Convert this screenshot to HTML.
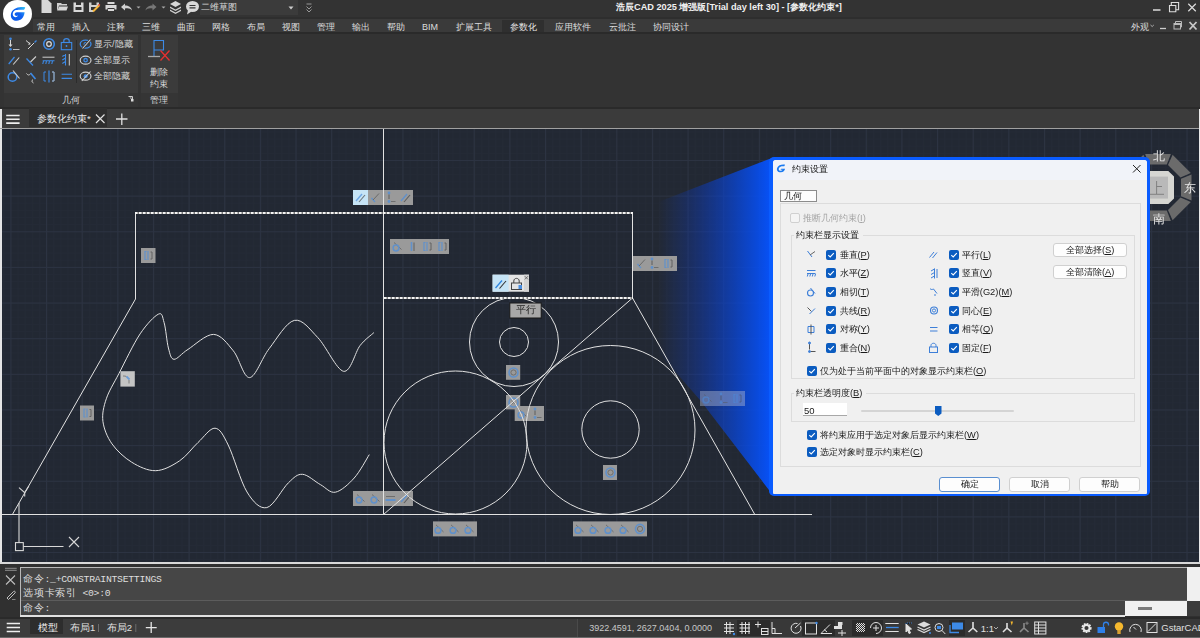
<!DOCTYPE html>
<html><head><meta charset="utf-8">
<style>
*{margin:0;padding:0;box-sizing:border-box}
html,body{width:1200px;height:638px;overflow:hidden;background:#333;font-family:"Liberation Sans",sans-serif;color:#ddd;position:relative}
.a{position:absolute}
.t{position:absolute;white-space:nowrap;line-height:1}
svg{overflow:visible}
</style></head><body>
<!-- TITLE BAR -->
<div class="a" style="left:0;top:0;width:1200px;height:17px;background:#333"></div>
<!-- logo -->
<div class="a" style="left:3.4px;top:-0.5px;width:28.7px;height:28.7px;border-radius:50%;background:#fff"></div>
<svg class="a" style="left:0;top:0" width="34" height="30" viewBox="0 0 34 30">
 <defs><linearGradient id="lg" x1="25" y1="7" x2="11" y2="20" gradientUnits="userSpaceOnUse"><stop offset="0" stop-color="#35c8f5"/><stop offset="0.45" stop-color="#1060f0"/><stop offset="1" stop-color="#0a58e8"/></linearGradient>
 <linearGradient id="lg2" x1="12" y1="20" x2="22" y2="12" gradientUnits="userSpaceOnUse"><stop offset="0" stop-color="#30b8f5"/><stop offset="1" stop-color="#0a50e8"/></linearGradient></defs>
 <path d="M25.2 7.2 C20.5 6.8 13.5 7.2 11.2 13 C9.8 17.5 12.5 21 16.8 20.8 C21 20.5 24 17.5 24.6 12.2 L17 12.2 C15.3 12.2 14.3 13.6 14.7 14.8 C15.1 16 16.8 16.3 18 15.6 C17 17.5 14.2 17.8 13.1 15.8 C12.2 14 13 11.3 15 10.3 C17 9.4 21 9.6 24 9.8 C24.8 9 25.2 8 25.2 7.2 Z" fill="url(#lg)"/>
</svg>
<!-- quick access icons -->
<svg class="a" style="left:40px;top:0" width="160" height="16" viewBox="40 0 160 16">
 <!-- new -->
 <path d="M41.5 0 H48 L51.5 3.5 V13 H41.5 Z" fill="#d8d8d8"/>
 <!-- open -->
 <path d="M57 3 H61 L62 4 H67 V5.5 H59 L57.5 10.5 H57 Z" fill="#d0d0d0"/>
 <path d="M59 6.5 H68 L66.5 10.5 H57.5 Z" fill="#d8d8d8"/>
 <!-- save -->
 <path d="M73.5 2.5 H76 V5 H81 V2.5 H83.5 V12 H73.5 Z M75.5 7 V10 H81.5 V7 Z" fill="#d8d8d8" fill-rule="evenodd"/>
 <!-- save as -->
 <path d="M89 2.5 H91.5 V5 H96.5 V2.5 H99 V5.5 L96.5 8 V7 H91 V10 H94 L93 12 H89 Z" fill="#d0d0d0"/>
 <path d="M93 11.5 L99.5 5" stroke="#f6b73c" stroke-width="2"/>
 <path d="M98.5 5.5 L99.8 4.2" stroke="#e04040" stroke-width="1.5"/>
 <!-- print -->
 <path d="M107.5 2 H114.5 V4 H107.5 Z M105.5 5 H116.5 V9.5 H114.5 V8 H107.5 V9.5 H105.5 Z M108 9 H114 V11 H108 Z" fill="#d8d8d8"/>
 <!-- undo -->
 <path d="M121 7 L125 3.5 V5.5 C128.5 5.5 131.5 7 132 10.5 C130.5 8.5 128.5 8 125 8.5 V10.5 Z" fill="#d0d0d0"/>
 <path d="M136.5 6.5 L140.5 6.5 L138.5 8.5 Z" fill="#aaa"/>
 <!-- redo -->
 <path d="M156.5 7 L152.5 3.5 V5.5 C149 5.5 146 7 145.5 10.5 C147 8.5 149 8 152.5 8.5 V10.5 Z" fill="#777"/>
 <path d="M161.5 6.5 L165.5 6.5 L163.5 8.5 Z" fill="#aaa"/>
 <!-- layers -->
 <path d="M175.5 1 L181 4 L175.5 7 L170 4 Z" fill="#d8d8d8"/>
 <path d="M170 6.5 L175.5 9.5 L181 6.5 V8 L175.5 11 L170 8 Z M170 9.5 L175.5 12.5 L181 9.5 V11 L175.5 14 L170 11 Z" fill="#cfcfcf"/>
 <!-- chat -->
 <ellipse cx="192.5" cy="6.5" rx="6.5" ry="5.5" fill="#d8d8d8"/>
 <path d="M188 10 L187 14.5 L191.5 11.5 Z" fill="#d8d8d8"/>
 <path d="M189.5 5.5 H195.5 M189.5 7.8 H195.5" stroke="#333" stroke-width="1.2"/>
</svg>
<div class="a" style="left:200px;top:0;width:98px;height:15px;background:#3b3b3b"></div>
<div class="t" style="left:201px;top:2.5px;font-size:9px;color:#d6d6d6">二维草图</div>
<svg class="a" style="left:287px;top:5px" width="8" height="6"><path d="M1.5 1.5 H6.5 L4 4.5 Z" fill="#ccc"/></svg>
<svg class="a" style="left:305px;top:3px" width="8" height="10"><path d="M1.5 1 H6.5 M1.5 3.5 L4 6 L6.5 3.5 M1.5 6.5 L4 9 L6.5 6.5" stroke="#999" stroke-width="1" fill="none"/></svg>
<div class="t" style="left:616px;top:3px;font-size:9.2px;font-weight:bold;color:#f0f0f0">浩辰CAD 2025 增强版[Trial day left 30] - [参数化约束*]</div>
<!-- window controls -->
<svg class="a" style="left:1150px;top:0" width="50" height="16">
 <path d="M3 10 H10.5" stroke="#ddd" stroke-width="1.5"/>
 <path d="M19.5 5.5 H25.8 V11.8 H19.5 Z M21.3 5.5 V2.5 H28.6 V9.7 H25.8" stroke="#ddd" stroke-width="1.1" fill="none"/>
 <path d="M38.3 3.8 L45.8 11.2 M45.8 3.8 L38.3 11.2" stroke="#ddd" stroke-width="1.2"/>
</svg>

<!-- MENU ROW -->
<div class="a" style="left:33px;top:17px;width:1167px;height:1.5px;background:#2e2e2e"></div>
<div class="a" style="left:33px;top:18.5px;width:1167px;height:13.5px;background:#3a3a3a"></div>
<div class="a" style="left:502px;top:20px;width:42px;height:13px;background:#2f2f2f"></div>
<div class="t" style="left:37px;top:23px;font-size:9px;color:#dcdcdc;word-spacing:0">常用</div>
<div class="t" style="left:72px;top:23px;font-size:9px;color:#dcdcdc">插入</div>
<div class="t" style="left:107px;top:23px;font-size:9px;color:#dcdcdc">注释</div>
<div class="t" style="left:142px;top:23px;font-size:9px;color:#dcdcdc">三维</div>
<div class="t" style="left:177px;top:23px;font-size:9px;color:#dcdcdc">曲面</div>
<div class="t" style="left:212px;top:23px;font-size:9px;color:#dcdcdc">网格</div>
<div class="t" style="left:247px;top:23px;font-size:9px;color:#dcdcdc">布局</div>
<div class="t" style="left:282px;top:23px;font-size:9px;color:#dcdcdc">视图</div>
<div class="t" style="left:317px;top:23px;font-size:9px;color:#dcdcdc">管理</div>
<div class="t" style="left:352px;top:23px;font-size:9px;color:#dcdcdc">输出</div>
<div class="t" style="left:387px;top:23px;font-size:9px;color:#dcdcdc">帮助</div>
<div class="t" style="left:422px;top:23px;font-size:9px;color:#dcdcdc">BIM</div>
<div class="t" style="left:456px;top:23px;font-size:9px;color:#dcdcdc">扩展工具</div>
<div class="t" style="left:510px;top:23px;font-size:9px;color:#e8e8e8">参数化</div>
<div class="t" style="left:555px;top:23px;font-size:9px;color:#dcdcdc">应用软件</div>
<div class="t" style="left:609px;top:23px;font-size:9px;color:#dcdcdc">云批注</div>
<div class="t" style="left:653px;top:23px;font-size:9px;color:#dcdcdc">协同设计</div>
<div class="t" style="left:1131px;top:23px;font-size:9px;color:#dcdcdc">外观</div>
<svg class="a" style="left:1150px;top:17px" width="50" height="16">
 <path d="M0.5 8 L2.2 9.5 L3.8 8" stroke="#bbb" stroke-width="0.9" fill="none"/>
 <path d="M10 11.5 H16" stroke="#ccc" stroke-width="1.3"/>
 <rect x="24" y="6.5" width="6.5" height="5.5" fill="none" stroke="#bbb" stroke-width="1"/>
 <path d="M25.5 6.5 V4.5 H31.5 V10 H30.5" stroke="#bbb" stroke-width="1" fill="none"/>
 <path d="M24 7.2 H30.5" stroke="#bbb" stroke-width="1.6"/>
 <path d="M39.5 5 L46.5 12.5 M46.5 5 L39.5 12.5" stroke="#c8c8c8" stroke-width="1.8"/>
</svg>
<!-- RIBBON -->
<div class="a" style="left:0;top:32px;width:1200px;height:2px;background:#2a2a2a"></div>
<div class="a" style="left:0;top:34px;width:1200px;height:74px;background:#333"></div>
<div class="a" style="left:4px;top:35px;width:134px;height:72px;background:#3b3b3b"></div>
<div class="a" style="left:4px;top:92.5px;width:134px;height:14.5px;background:#353535"></div>
<div class="a" style="left:141px;top:35px;width:37px;height:72px;background:#3b3b3b"></div>
<div class="a" style="left:141px;top:92.5px;width:37px;height:14.5px;background:#353535"></div>
<div class="a" style="left:0;top:107px;width:1200px;height:1.5px;background:#2a2a2a"></div>
<div class="a" style="left:76px;top:40px;width:1px;height:43px;background:#2c2c2c"></div>
<svg class="a" style="left:0;top:0" width="180" height="110">
 <!-- coincident -->
 <circle cx="10.5" cy="38.8" r="1.3" fill="#3d8ae6"/>
 <path d="M10.5 40 V45.5" stroke="#d8d8d8" stroke-width="1"/>
 <path d="M8.5 44.5 L10.5 47 L12.5 44.5 Z" fill="#d8d8d8"/>
 <circle cx="10.5" cy="49.3" r="1.3" fill="#3d8ae6"/>
 <path d="M13 49.5 H19.5" stroke="#bbb" stroke-width="1"/>
 <!-- collinear -->
 <path d="M26 40.5 L29.5 43.5" stroke="#d8d8d8" stroke-width="1"/>
 <path d="M28 44.8 L30.5 44.5 L30 42 Z" fill="#d8d8d8"/>
 <path d="M28 49 L34 43" stroke="#d8d8d8" stroke-width="1"/>
 <path d="M34.5 42.5 L36.5 40.5" stroke="#3d8ae6" stroke-width="1.2"/>
 <!-- concentric -->
 <circle cx="49" cy="44" r="5.3" fill="none" stroke="#3d8ae6" stroke-width="1.6"/>
 <circle cx="49" cy="44" r="2.3" fill="none" stroke="#ddd" stroke-width="1.2"/>
 <!-- lock -->
 <path d="M63.8 42.5 V40.8 C63.8 37.8 69.2 37.8 69.2 40.8 V42.5" stroke="#3d8ae6" stroke-width="1.2" fill="none"/>
 <rect x="61.3" y="42.5" width="10.4" height="7.2" fill="none" stroke="#3d8ae6" stroke-width="1.1"/>
 <circle cx="66.5" cy="46" r="0.9" fill="#3d8ae6"/>
 <!-- parallel -->
 <path d="M8.7 64 L14.5 57" stroke="#3d8ae6" stroke-width="1.2"/>
 <path d="M13.2 64.5 L19.2 57.5" stroke="#cfcfcf" stroke-width="1.1"/>
 <!-- perpendicular -->
 <path d="M26.5 58.5 L33 65.5" stroke="#3d8ae6" stroke-width="1.2"/>
 <path d="M30.5 62 L36 56.5" stroke="#cfcfcf" stroke-width="1.1"/>
 <!-- horizontal -->
 <path d="M42.5 57.2 H54.5" stroke="#cfcfcf" stroke-width="1"/>
 <path d="M42.7 60.8 H54.5 M43.5 61 L42.8 64 M46.5 61 L45.8 64 M49.5 61 L48.8 64 M52.5 61 L51.8 64" stroke="#3d8ae6" stroke-width="1.1"/>
 <!-- vertical -->
 <path d="M65.5 54 V65.5 M65.5 54.5 L62.3 56.5 M65.5 58 L62.3 60 M65.5 61.5 L62.3 63.5" stroke="#3d8ae6" stroke-width="1.1"/>
 <path d="M69.3 54 V65.5" stroke="#cfcfcf" stroke-width="1"/>
 <!-- tangent -->
 <circle cx="12.5" cy="77" r="4.3" fill="none" stroke="#3d8ae6" stroke-width="1.5"/>
 <path d="M13 70.5 L19.5 78.5" stroke="#cfcfcf" stroke-width="1.1"/>
 <!-- smooth -->
 <path d="M26.5 73.5 C28 75.5 29.5 75.5 30.5 73.5" stroke="#cfcfcf" stroke-width="1" fill="none"/>
 <path d="M30.5 73 L35.5 79" stroke="#3d8ae6" stroke-width="1.6"/>
 <path d="M33 79.5 C31.5 80.5 31.5 82 33.5 83" stroke="#cfcfcf" stroke-width="1" fill="none"/>
 <!-- symmetric -->
 <path d="M46 72 H44 V81 H46 M52 72 H54 V81 H52" stroke="#3d8ae6" stroke-width="1" fill="none"/>
 <path d="M49 70.5 V82.5" stroke="#3d8ae6" stroke-width="1.2"/>
 <path d="M52 72 H54 V81 H52" stroke="#aaa" stroke-width="1" fill="none"/>
 <!-- equal -->
 <path d="M61.6 74.3 H72 M61.6 78.4 H72" stroke="#3d8ae6" stroke-width="1.1"/>
 <!-- eyes -->
 <ellipse cx="85.6" cy="44.1" rx="5.4" ry="4" fill="none" stroke="#3d8ae6" stroke-width="1.3"/>
 <circle cx="85.6" cy="44.1" r="1.6" fill="none" stroke="#3d8ae6" stroke-width="1.1"/>
 <path d="M82.5 48.5 L90.5 39.5" stroke="#333" stroke-width="2.4"/>
 <path d="M82.5 48.5 L90.5 39.5" stroke="#d0d0d0" stroke-width="1.1"/>
 <ellipse cx="85.6" cy="60.2" rx="5.4" ry="4" fill="none" stroke="#cfcfcf" stroke-width="1.2"/>
 <circle cx="85.6" cy="60.2" r="1.7" fill="none" stroke="#3d8ae6" stroke-width="1.3"/>
 <ellipse cx="85.6" cy="76.2" rx="5.4" ry="4" fill="none" stroke="#cfcfcf" stroke-width="1.2"/>
 <circle cx="85.6" cy="76.2" r="2" fill="#3d8ae6"/>
 <path d="M81.8 81 L90.5 71.5" stroke="#d0d0d0" stroke-width="1.1"/>
 <!-- delete constraint -->
 <path d="M154 57 V40.5 H163.5 V50 H154" stroke="#3d8ae6" stroke-width="1.1" fill="none"/>
 <path d="M148 56.5 H160" stroke="#aaa" stroke-width="1.3"/>
 <path d="M160.5 50.5 L169.5 60.5 M169.5 50.5 L160.5 60.5" stroke="#e83030" stroke-width="1.3"/>
 <!-- dialog launcher -->
 <path d="M128.5 96.5 H132.5 V100.5" stroke="#ccc" stroke-width="1" fill="none"/>
 <path d="M129.5 97.5 H131.5 V99.5 Z" fill="#ccc"/>
 <rect x="131" y="99" width="2.5" height="2.5" fill="#ddd"/>
</svg>
<div class="t" style="left:94px;top:39.5px;font-size:9px;color:#d8d8d8">显示/隐藏</div>
<div class="t" style="left:94px;top:56px;font-size:9px;color:#d8d8d8">全部显示</div>
<div class="t" style="left:94px;top:72px;font-size:9px;color:#d8d8d8">全部隐藏</div>
<div class="t" style="left:150px;top:67.5px;font-size:9px;color:#d8d8d8">删除</div>
<div class="t" style="left:150px;top:79.5px;font-size:9px;color:#d8d8d8">约束</div>
<div class="t" style="left:62px;top:95.5px;font-size:9px;color:#d8d8d8">几何</div>
<div class="t" style="left:150px;top:95.5px;font-size:9px;color:#d8d8d8">管理</div>

<!-- TAB ROW -->
<div class="a" style="left:0;top:108.5px;width:1200px;height:19.5px;background:#3b3b3b"></div>
<div class="a" style="left:29px;top:108px;width:78px;height:19px;background:#2e2e2e"></div>
<svg class="a" style="left:0;top:108px" width="140" height="20">
 <path d="M6.2 7.5 H19.6 M6.2 11.3 H19.6 M6.2 15.1 H19.6" stroke="#eee" stroke-width="1.6"/>
 <path d="M96 6.5 L104.5 15 M104.5 6.5 L96 15" stroke="#e0e0e0" stroke-width="1.2"/>
 <path d="M116 11 H127.5 M121.8 5.5 V17" stroke="#e0e0e0" stroke-width="1.3"/>
</svg>
<div class="t" style="left:37px;top:114px;font-size:9.5px;color:#e6e6e6">参数化约束*</div>

<!-- CANVAS -->
<svg class="a" style="left:0;top:128px" width="1200" height="435" viewBox="0 128 1200 435">
<defs>
 <pattern id="gmin" patternUnits="userSpaceOnUse" x="10.4" y="160" width="7.128" height="7.128">
  <path d="M0.5 0 V7.128 M0 0.5 H7.128" stroke="#242a36" stroke-width="1" fill="none"/>
 </pattern>
 <pattern id="gmaj" patternUnits="userSpaceOnUse" x="10.4" y="160" width="35.64" height="35.64">
  <path d="M0.5 0 V35.64 M0 0.5 H35.64" stroke="#2c3342" stroke-width="1" fill="none"/>
 </pattern>
 <linearGradient id="beam" gradientUnits="userSpaceOnUse" x1="658" y1="0" x2="772" y2="0">
  <stop offset="0" stop-color="#0a3cc8" stop-opacity="0"/>
  <stop offset="0.3" stop-color="#0a3ccc" stop-opacity="0.32"/>
  <stop offset="0.7" stop-color="#0848e0" stop-opacity="0.75"/>
  <stop offset="1" stop-color="#0652fa" stop-opacity="1"/>
 </linearGradient>
 <symbol id="i-tan" viewBox="0 0 15 15"><path d="M4 3.5 L11.5 10.5" stroke="#555" stroke-width="0.9"/><circle cx="6" cy="9" r="2.9" fill="none" stroke="#4a8ee0" stroke-width="1.5"/></symbol>
 <symbol id="i-con" viewBox="0 0 15 15"><circle cx="7.5" cy="7.5" r="4.5" fill="none" stroke="#4a8ee0" stroke-width="1.6"/><circle cx="7.5" cy="7.5" r="2.6" fill="none" stroke="#555" stroke-width="0.9"/></symbol>
 <symbol id="i-coin" viewBox="0 0 15 15"><circle cx="7.5" cy="7.5" r="4.5" fill="none" stroke="#4a8ee0" stroke-width="1.6"/><path d="M5.5 5.5 L9.5 9.5 M9.5 5.5 L5.5 9.5" stroke="#666" stroke-width="0.9"/></symbol>
 <symbol id="i-par" viewBox="0 0 15 15"><path d="M3 11 L9 4" stroke="#4a8ee0" stroke-width="1.4"/><path d="M6 12 L12 5" stroke="#444" stroke-width="1.1"/></symbol>
 <symbol id="i-perp" viewBox="0 0 15 15"><path d="M3.5 8 L7 12" stroke="#4a8ee0" stroke-width="1.3"/><path d="M5 10 L11 3.5" stroke="#555" stroke-width="1"/></symbol>
 <symbol id="i-pt" viewBox="0 0 15 15"><circle cx="6" cy="3" r="1.4" fill="#4a8ee0"/><path d="M6 4.5 V9" stroke="#444" stroke-width="1"/><circle cx="6" cy="11.5" r="1.4" fill="#4a8ee0"/><path d="M8 11.5 H12.5" stroke="#555" stroke-width="0.9"/></symbol>
 <symbol id="i-vert" viewBox="0 0 15 15"><path d="M6.5 3 V12" stroke="#4a8ee0" stroke-width="1.6"/><path d="M9 3.5 V12" stroke="#444" stroke-width="0.9"/></symbol>
 <symbol id="i-sym" viewBox="0 0 15 15"><path d="M5.5 3.5 H4 V11.5 H5.5 M7 3 V12" stroke="#4a8ee0" stroke-width="1.2" fill="none"/><path d="M9.5 4 H11 V11 H9.5" stroke="#444" stroke-width="0.9" fill="none"/></symbol>
 <symbol id="i-hor" viewBox="0 0 15 15"><path d="M3 5.5 H12" stroke="#555" stroke-width="0.9"/><path d="M2.5 9 H12.5" stroke="#4a8ee0" stroke-width="2"/></symbol>
 <symbol id="i-smooth" viewBox="0 0 15 15"><path d="M3 5 C4.5 5 5.5 5 6.5 5.5" stroke="#555" stroke-width="0.9" fill="none"/><path d="M6.5 5.5 L9.5 8.5" stroke="#4a8ee0" stroke-width="1.8"/><path d="M9 9 V12.5" stroke="#555" stroke-width="0.9"/></symbol>
</defs>
<rect x="0" y="128" width="1200" height="435" fill="#222833"/>
<rect x="0" y="128" width="1200" height="435" fill="url(#gmin)"/>
<rect x="0" y="128" width="1200" height="435" fill="url(#gmaj)"/>
<!-- beam -->
<polygon points="772,158 560,240 700,400 772,494" fill="url(#beam)"/>
<!-- constraint bars -->
<g fill="#9a9a9a">
 <rect x="353" y="190" width="60" height="15"/>
 <rect x="141" y="248" width="14.5" height="15"/>
 <rect x="390" y="239" width="59" height="15"/>
 <rect x="633" y="256" width="44" height="15"/>
 <rect x="80" y="405.5" width="14" height="15"/>
 <rect x="506" y="365" width="14.2" height="14.8"/>
 <rect x="506" y="395" width="14.2" height="14.4"/>
 <rect x="514.7" y="406" width="29.3" height="15"/>
 <rect x="603" y="465" width="14" height="15"/>
 <rect x="353" y="491" width="60" height="15"/>
 <rect x="433" y="521.4" width="44" height="15"/>
 <rect x="573" y="521.4" width="74" height="15"/>
</g>
<rect x="700" y="391" width="45" height="15" fill="#b0b8d0" fill-opacity="0.45"/>
<rect x="120.4" y="371.2" width="14.4" height="15.4" fill="#c4c4c4"/>
<rect x="353" y="190" width="15" height="15" fill="#c6e4f6"/>
<rect x="492.6" y="274.7" width="36.4" height="17" fill="#e4e4e4"/>
<rect x="492.6" y="274.7" width="16" height="17" fill="#c6e4f6"/>
<rect x="524" y="274.7" width="5" height="17" fill="#d4d4d4"/>
<!-- bar icons -->
<g opacity="0.7">
<use href="#i-par" x="353" y="190" width="15" height="15"/>
<use href="#i-perp" x="368" y="190" width="15" height="15"/>
<use href="#i-pt" x="383" y="190" width="15" height="15"/>
<use href="#i-par" x="398" y="190" width="15" height="15"/>
<use href="#i-sym" x="141" y="248" width="15" height="15"/>
<use href="#i-tan" x="390" y="239" width="15" height="15"/>
<use href="#i-vert" x="405" y="239" width="15" height="15"/>
<use href="#i-sym" x="420" y="239" width="15" height="15"/>
<use href="#i-sym" x="435" y="239" width="15" height="15"/>
<use href="#i-perp" x="634" y="256" width="15" height="15"/>
<use href="#i-pt" x="646" y="256" width="15" height="15"/>
<use href="#i-sym" x="661" y="256" width="15" height="15"/>
<use href="#i-smooth" x="120" y="371" width="15" height="15"/>
<use href="#i-sym" x="80" y="405.5" width="15" height="15"/>
<use href="#i-con" x="506" y="365" width="15" height="15"/>
<use href="#i-coin" x="506" y="395" width="15" height="15"/>
<use href="#i-tan" x="515" y="406" width="15" height="15"/>
<use href="#i-pt" x="529" y="406" width="15" height="15"/>
<use href="#i-con" x="603" y="465" width="15" height="15"/>
<use href="#i-tan" x="353" y="491" width="15" height="15"/>
<use href="#i-tan" x="368" y="491" width="15" height="15"/>
<use href="#i-hor" x="383" y="491" width="15" height="15"/>
<use href="#i-par" x="398" y="491" width="15" height="15"/>
<use href="#i-tan" x="432" y="521.4" width="15" height="15"/>
<use href="#i-tan" x="447" y="521.4" width="15" height="15"/>
<use href="#i-tan" x="462" y="521.4" width="15" height="15"/>
<use href="#i-tan" x="572" y="521.4" width="15" height="15"/>
<use href="#i-tan" x="587" y="521.4" width="15" height="15"/>
<use href="#i-tan" x="602" y="521.4" width="15" height="15"/>
<use href="#i-tan" x="617" y="521.4" width="15" height="15"/>
<use href="#i-con" x="632.5" y="521.4" width="15" height="15"/>
</g>
<g opacity="0.5">
<use href="#i-tan" x="700" y="391" width="15" height="15"/>
<use href="#i-pt" x="715" y="391" width="15" height="15"/>
<use href="#i-sym" x="730" y="391" width="15" height="15"/>
</g>
<!-- parallel+lock bar icons -->
<path d="M495.5 288 L502 280.5" stroke="#2f86e0" stroke-width="1.3"/>
<path d="M499.5 288.5 L506 281" stroke="#333" stroke-width="1.1"/>
<path d="M513.8 283 V281 C513.8 277.5 519.2 277.5 519.2 281 V283" stroke="#444" stroke-width="1" fill="none"/>
<rect x="511.5" y="283" width="10" height="6.5" fill="none" stroke="#444" stroke-width="1"/>
<rect x="518.5" y="285" width="3.5" height="4" fill="#4a8ee0"/>
<path d="M524.8 276.2 L528 279.4 M528 276.2 L524.8 279.4" stroke="#555" stroke-width="0.8"/>
<!-- geometry -->
<g stroke="#e2e2e2" stroke-width="1" fill="none">
 <path d="M2 514.5 H812"/>
 <path d="M383.5 128 V514"/>
 <path d="M135.5 213 V299 L12.4 514.5"/>
 <path d="M632.5 213 V298 L754.8 514.5"/>
 <path d="M632.5 298 L383.5 514.5"/>
 <circle cx="514" cy="342" r="44.5"/>
 <circle cx="514" cy="342" r="14.5"/>
 <circle cx="455.5" cy="442.5" r="71.5"/>
 <circle cx="610.5" cy="430" r="84.5"/>
 <circle cx="610.5" cy="429.5" r="28.7"/>
 <path d="M373.9 332.6 C371.6 334.8 365.2 339.1 360.1 345.5 C355.1 351.9 350.7 372.6 343.6 371.3 C336.6 370.0 326.0 346.1 317.8 337.6 C309.6 329.1 302.4 318.6 294.3 320.4 C286.2 322.2 276.6 339.1 269.2 348.6 C261.8 358.1 255.6 377.2 249.6 377.6 C243.6 378.0 239.3 358.0 233.3 350.8 C227.3 343.6 221.1 334.6 213.5 334.4 C205.9 334.2 194.6 345.2 188.0 349.4 C181.4 353.5 177.3 359.5 174.0 359.3 C170.7 359.1 170.1 354.1 168.4 348.0 C166.8 341.9 165.8 328.2 164.1 322.6 C162.4 317.0 162.5 312.2 158.5 314.1 C154.5 316.0 146.7 324.0 140.1 333.9 C133.5 343.8 124.6 362.6 119.0 373.4 C113.4 384.2 109.0 390.8 106.3 398.8 C103.6 406.8 102.0 413.8 102.9 421.3 C103.9 428.8 107.2 437.1 112.0 443.9 C116.8 450.7 124.4 457.7 131.7 462.2 C139.0 466.7 147.7 470.9 155.7 470.7 C163.7 470.5 172.5 465.5 179.6 460.8 C186.7 456.1 192.1 447.9 198.0 442.5 C203.9 437.1 210.0 427.8 215.0 428.2 C220.0 428.6 222.9 434.4 228.2 445.0 C233.5 455.6 240.6 481.6 247.0 492.0 C253.4 502.4 259.9 509.1 266.8 507.6 C273.7 506.1 282.4 488.4 288.4 482.8 C294.3 477.2 297.2 474.0 302.5 474.3 C307.8 474.6 314.9 481.6 320.4 484.6 C325.9 487.6 329.8 493.3 335.4 492.2 C341.0 491.1 348.5 484.3 354.2 478.0 C359.9 471.7 366.8 458.5 369.3 454.6"/>
</g>
<g stroke="#7c7c7c" stroke-width="2.2" fill="none">
 <path d="M135 213 H633"/>
 <path d="M384 298 H633"/>
</g>
<g stroke="#f4f4f4" stroke-width="2.2" stroke-dasharray="2.5 1.5" fill="none">
 <path d="M135 213 H633"/>
 <path d="M384 298 H633"/>
</g>
<!-- tooltip -->
<rect x="509.8" y="303" width="31.4" height="15" fill="#a8a8a8" stroke="#161616" stroke-width="1"/>
<!-- UCS -->
<g stroke="#d8d8d8" stroke-width="1.1" fill="none">
 <path d="M19 503 V543"/>
 <rect x="15.5" y="542.6" width="7.8" height="8"/>
 <path d="M23.3 546.5 H63.5"/>
 <path d="M69 537 L79 547 M79 537 L69 547"/>
 <path d="M19 487.6 L24.7 492.6 L28.9 486 M24.7 492.6 V496.5"/>
</g>
<!-- viewcube -->
<g fill="#6b6b6b">
<polygon points="1145.1,154.0 1170.9,154.0 1166.8,164.5 1149.2,164.5"/>
<polygon points="1172.6,154.7 1190.8,172.9 1180.5,177.5 1168.0,165.0"/>
<polygon points="1191.5,174.6 1191.5,200.4 1181.0,196.3 1181.0,178.7"/>
<polygon points="1190.8,202.1 1172.6,220.3 1168.0,210.0 1180.5,197.5"/>
<polygon points="1170.9,221.0 1145.1,221.0 1149.2,210.5 1166.8,210.5"/>
<polygon points="1143.4,220.3 1125.2,202.1 1135.5,197.5 1148.0,210.0"/>
<polygon points="1124.5,200.4 1124.5,174.6 1135.0,178.7 1135.0,196.3"/>
<polygon points="1125.2,172.9 1143.4,154.7 1148.0,165.0 1135.5,177.5"/>
</g>
<polygon points="1141,171 1168.3,171 1174,176.5 1174,198.5 1168.3,204 1141,204" fill="#d6d6d2"/>
<rect x="1141" y="176.6" width="27" height="22" fill="#b9b9b9"/>
<path d="M1156.6 181 V194 M1156.6 186.5 H1162 M1150 194.3 H1164" stroke="#7a7a7a" stroke-width="0.9" fill="none"/>

</svg>
<div class="t" style="left:515.5px;top:305px;font-size:10px;color:#1e1e1e">平行</div>
<div class="t" style="left:1152.5px;top:151px;font-size:11.5px;color:#e6e6e6">北</div>
<div class="t" style="left:1183.5px;top:182.5px;font-size:11.5px;color:#e6e6e6">东</div>
<div class="t" style="left:1152.5px;top:213.5px;font-size:11.5px;color:#e6e6e6">南</div>

<div class="a" style="left:0;top:109px;width:2px;height:454px;background:#e4e4e4"></div>
<div class="a" style="left:1199px;top:109px;width:1px;height:454px;background:#e8e8e8"></div>
<div class="a" style="left:0;top:128px;width:1199px;height:1px;background:#a0a0a0"></div>
<!-- DIALOG -->
<div class="a" style="left:769px;top:156.5px;width:381px;height:339.5px;background:#0a5cff;border-radius:5px"></div>
<div class="a" style="left:772.5px;top:160px;width:374px;height:333.5px;background:#f0f0f0;border-radius:3px 3px 1px 1px"></div>
<div class="a" style="left:772.5px;top:160px;width:374px;height:20px;background:#f1f3f9;border-radius:3px 3px 0 0"></div>
<svg class="a" style="left:776px;top:163px" width="11" height="11" viewBox="0 0 20 17">
 <path d="M16.5 1.5 C11 0.5 4 2 2 7.5 C0.5 12 4 16 9 15.5 C13 15 16 12.5 16.5 9 L9.5 9 C8.5 9 8 10.5 9 11 L12 11 C11 12.5 9 13 7 12.5 C5 12 4.5 9.5 5.5 7.5 C7 4.5 11 4 15 4.5 Z" fill="#1a7af0"/>
</svg>
<div class="t" style="left:792px;top:164.8px;font-size:9.3px;color:#1a1a1a">约束设置</div>
<svg class="a" style="left:1132px;top:164px" width="10" height="10"><path d="M1 1 L8.5 8.5 M8.5 1 L1 8.5" stroke="#222" stroke-width="1"/></svg>
<!-- outer panel -->
<div class="a" style="left:780px;top:203px;width:360.5px;height:263.5px;border:1px solid #dcdcdc;background:#f0f0f0"></div>
<!-- tab -->
<div class="a" style="left:780px;top:190px;width:36.5px;height:12px;border:1px solid #8c8c8c;background:#fdfdfd"></div>
<div class="t" style="left:784px;top:191.6px;font-size:9.3px;color:#111">几何</div>
<!-- disabled checkbox -->
<div class="a" style="left:790px;top:213.3px;width:10px;height:10px;border:1px solid #d0d0d0;border-radius:2px;background:#f4f4f4"></div>
<div class="t" style="left:803px;top:214.3px;font-size:9.3px;color:#a4a4a4">推断几何约束(<u>I</u>)</div>
<!-- group 1 -->
<div class="a" style="left:790.5px;top:234.5px;width:344px;height:144.5px;border:1px solid #dcdcdc"></div>
<div class="a" style="left:794px;top:229px;width:69px;height:10px;background:#f0f0f0"></div>
<div class="t" style="left:796px;top:231.3px;font-size:9.3px;color:#1a1a1a">约束栏显示设置</div>
<div class="a" style="left:826.4px;top:249.8px;width:10px;height:10px;background:#0b5cc0;border-radius:2px"></div><svg class="a" style="left:826.4px;top:249.8px" width="10" height="10"><path d="M2.3 5.2 L4.2 7 L7.8 3.2" stroke="#fff" stroke-width="1.1" fill="none"/></svg>
<div class="t" style="left:839.5px;top:250.9px;font-size:9.3px;color:#1a1a1a">垂直(<u>P</u>)</div>
<div class="a" style="left:949.1px;top:249.8px;width:10px;height:10px;background:#0b5cc0;border-radius:2px"></div><svg class="a" style="left:949.1px;top:249.8px" width="10" height="10"><path d="M2.3 5.2 L4.2 7 L7.8 3.2" stroke="#fff" stroke-width="1.1" fill="none"/></svg>
<div class="t" style="left:961.8px;top:250.9px;font-size:9.3px;color:#1a1a1a">平行(<u>L</u>)</div>
<div class="a" style="left:826.4px;top:268.3px;width:10px;height:10px;background:#0b5cc0;border-radius:2px"></div><svg class="a" style="left:826.4px;top:268.3px" width="10" height="10"><path d="M2.3 5.2 L4.2 7 L7.8 3.2" stroke="#fff" stroke-width="1.1" fill="none"/></svg>
<div class="t" style="left:839.5px;top:269.4px;font-size:9.3px;color:#1a1a1a">水平(<u>Z</u>)</div>
<div class="a" style="left:949.1px;top:268.3px;width:10px;height:10px;background:#0b5cc0;border-radius:2px"></div><svg class="a" style="left:949.1px;top:268.3px" width="10" height="10"><path d="M2.3 5.2 L4.2 7 L7.8 3.2" stroke="#fff" stroke-width="1.1" fill="none"/></svg>
<div class="t" style="left:961.8px;top:269.4px;font-size:9.3px;color:#1a1a1a">竖直(<u>V</u>)</div>
<div class="a" style="left:826.4px;top:287.0px;width:10px;height:10px;background:#0b5cc0;border-radius:2px"></div><svg class="a" style="left:826.4px;top:287.0px" width="10" height="10"><path d="M2.3 5.2 L4.2 7 L7.8 3.2" stroke="#fff" stroke-width="1.1" fill="none"/></svg>
<div class="t" style="left:839.5px;top:288.1px;font-size:9.3px;color:#1a1a1a">相切(<u>T</u>)</div>
<div class="a" style="left:949.1px;top:287.0px;width:10px;height:10px;background:#0b5cc0;border-radius:2px"></div><svg class="a" style="left:949.1px;top:287.0px" width="10" height="10"><path d="M2.3 5.2 L4.2 7 L7.8 3.2" stroke="#fff" stroke-width="1.1" fill="none"/></svg>
<div class="t" style="left:961.8px;top:288.1px;font-size:9.3px;color:#1a1a1a">平滑(G2)(<u>M</u>)</div>
<div class="a" style="left:826.4px;top:305.8px;width:10px;height:10px;background:#0b5cc0;border-radius:2px"></div><svg class="a" style="left:826.4px;top:305.8px" width="10" height="10"><path d="M2.3 5.2 L4.2 7 L7.8 3.2" stroke="#fff" stroke-width="1.1" fill="none"/></svg>
<div class="t" style="left:839.5px;top:306.9px;font-size:9.3px;color:#1a1a1a">共线(<u>R</u>)</div>
<div class="a" style="left:949.1px;top:305.8px;width:10px;height:10px;background:#0b5cc0;border-radius:2px"></div><svg class="a" style="left:949.1px;top:305.8px" width="10" height="10"><path d="M2.3 5.2 L4.2 7 L7.8 3.2" stroke="#fff" stroke-width="1.1" fill="none"/></svg>
<div class="t" style="left:961.8px;top:306.9px;font-size:9.3px;color:#1a1a1a">同心(<u>E</u>)</div>
<div class="a" style="left:826.4px;top:324.3px;width:10px;height:10px;background:#0b5cc0;border-radius:2px"></div><svg class="a" style="left:826.4px;top:324.3px" width="10" height="10"><path d="M2.3 5.2 L4.2 7 L7.8 3.2" stroke="#fff" stroke-width="1.1" fill="none"/></svg>
<div class="t" style="left:839.5px;top:325.4px;font-size:9.3px;color:#1a1a1a">对称(<u>Y</u>)</div>
<div class="a" style="left:949.1px;top:324.3px;width:10px;height:10px;background:#0b5cc0;border-radius:2px"></div><svg class="a" style="left:949.1px;top:324.3px" width="10" height="10"><path d="M2.3 5.2 L4.2 7 L7.8 3.2" stroke="#fff" stroke-width="1.1" fill="none"/></svg>
<div class="t" style="left:961.8px;top:325.4px;font-size:9.3px;color:#1a1a1a">相等(<u>Q</u>)</div>
<div class="a" style="left:826.4px;top:343.0px;width:10px;height:10px;background:#0b5cc0;border-radius:2px"></div><svg class="a" style="left:826.4px;top:343.0px" width="10" height="10"><path d="M2.3 5.2 L4.2 7 L7.8 3.2" stroke="#fff" stroke-width="1.1" fill="none"/></svg>
<div class="t" style="left:839.5px;top:344.1px;font-size:9.3px;color:#1a1a1a">重合(<u>N</u>)</div>
<div class="a" style="left:949.1px;top:343.0px;width:10px;height:10px;background:#0b5cc0;border-radius:2px"></div><svg class="a" style="left:949.1px;top:343.0px" width="10" height="10"><path d="M2.3 5.2 L4.2 7 L7.8 3.2" stroke="#fff" stroke-width="1.1" fill="none"/></svg>
<div class="t" style="left:961.8px;top:344.1px;font-size:9.3px;color:#1a1a1a">固定(<u>F</u>)</div>
<svg class="a" style="left:800px;top:240px" width="150" height="120" viewBox="800 240 150 120">
 <g stroke="#3d7fd8" fill="none" stroke-width="1">
  <path d="M807.5 251 L812 257"/><path d="M810 255 L815 251.5" stroke="#666"/>
  <path d="M807 270.5 H815.5"/><path d="M807 273.5 H815.5 M808 274 L807.3 276.5 M810.5 274 L809.8 276.5 M813 274 L812.3 276.5 M815.5 274 L814.8 276.5"/>
  <circle cx="810.5" cy="293" r="3" stroke-width="1.1"/><path d="M810.5 288 L815 293.5"/>
  <path d="M807.5 307.5 L811.5 311.5" stroke="#555"/><path d="M809.5 314 L815 308.5"/>
  <path d="M808 326.5 H814 V332.5 H808 Z"/><path d="M811 324.5 V334.5" stroke="#555"/>
  <path d="M809.5 344 V349.5" stroke="#555"/><path d="M810.5 351.5 H815.5" stroke="#555"/><circle cx="809.5" cy="343" r="1" fill="#3d7fd8"/><circle cx="809.5" cy="351.5" r="1" fill="#3d7fd8"/>
  <path d="M929.5 257.5 L934 252 M932.5 258 L937 252.5"/>
  <path d="M934.5 268.5 V278.5 M934.5 269 L931 271 M934.5 272.5 L931 274.5 M934.5 276 L931 278 M937 269 V278"/>
  <path d="M930 288.5 C931 290 932.5 289.5 933.5 289 L937 293.5 M935 294 V296"/>
  <circle cx="934" cy="310.5" r="3.5" stroke-width="1.1"/><circle cx="934" cy="310.5" r="1.6"/>
  <path d="M930 327.5 H937.5 M930 331 H937.5"/>
  <path d="M931 347 V345.5 C931 342.5 936 342.5 936 345.5 V347"/><rect x="929.5" y="347" width="8" height="5.5"/>
 </g>
</svg>
<div class="a" style="left:1053.4px;top:243.1px;width:73.4px;height:14.0px;background:#fdfdfd;border:1px solid #d0d0d0;border-radius:3px"></div><div class="t" style="left:1053.4px;top:246.2px;width:73.4px;text-align:center;font-size:9.3px;color:#1a1a1a">全部选择(<u>S</u>)</div>
<div class="a" style="left:1053.4px;top:264.5px;width:73.4px;height:14.0px;background:#fdfdfd;border:1px solid #d0d0d0;border-radius:3px"></div><div class="t" style="left:1053.4px;top:267.6px;width:73.4px;text-align:center;font-size:9.3px;color:#1a1a1a">全部清除(<u>A</u>)</div>
<div class="a" style="left:806.8px;top:366.2px;width:10px;height:10px;background:#0b5cc0;border-radius:2px"></div><svg class="a" style="left:806.8px;top:366.2px" width="10" height="10"><path d="M2.3 5.2 L4.2 7 L7.8 3.2" stroke="#fff" stroke-width="1.1" fill="none"/></svg>
<div class="t" style="left:820px;top:367.3px;font-size:9.3px;color:#1a1a1a">仅为处于当前平面中的对象显示约束栏(<u>O</u>)</div>
<div class="a" style="left:790.5px;top:392.5px;width:344px;height:29px;border:1px solid #dcdcdc"></div>
<div class="a" style="left:794px;top:387px;width:72px;height:10px;background:#f0f0f0"></div>
<div class="t" style="left:796px;top:388.8px;font-size:9.3px;color:#1a1a1a">约束栏透明度(<u>B</u>)</div>
<div class="a" style="left:803px;top:403.4px;width:44.3px;height:13px;background:#fff;border-bottom:1px solid #a8a8a8"></div>
<div class="t" style="left:804px;top:406.3px;font-size:9.5px;color:#1a1a1a">50</div>
<div class="a" style="left:861px;top:409.5px;width:153px;height:2px;background:#d4d4d4;border-radius:1px"></div>
<svg class="a" style="left:934px;top:405px" width="9" height="12"><path d="M1 1 H7.5 V8.5 L4.25 11 L1 8.5 Z" fill="#0b5cc0"/></svg>
<div class="a" style="left:806.8px;top:430.3px;width:10px;height:10px;background:#0b5cc0;border-radius:2px"></div><svg class="a" style="left:806.8px;top:430.3px" width="10" height="10"><path d="M2.3 5.2 L4.2 7 L7.8 3.2" stroke="#fff" stroke-width="1.1" fill="none"/></svg>
<div class="t" style="left:820px;top:431.3px;font-size:9.3px;color:#1a1a1a">将约束应用于选定对象后显示约束栏(<u>W</u>)</div>
<div class="a" style="left:806.8px;top:446.6px;width:10px;height:10px;background:#0b5cc0;border-radius:2px"></div><svg class="a" style="left:806.8px;top:446.6px" width="10" height="10"><path d="M2.3 5.2 L4.2 7 L7.8 3.2" stroke="#fff" stroke-width="1.1" fill="none"/></svg>
<div class="t" style="left:820px;top:447.7px;font-size:9.3px;color:#1a1a1a">选定对象时显示约束栏(<u>C</u>)</div>
<div class="a" style="left:939.3px;top:476.6px;width:60.7px;height:15.0px;background:#fdfdfd;border:1px solid #5a8fd0;border-radius:3px"></div><div class="t" style="left:939.3px;top:480.2px;width:60.7px;text-align:center;font-size:9.3px;color:#1a1a1a">确定</div>
<div class="a" style="left:1009.3px;top:476.6px;width:60.7px;height:15.0px;background:#fdfdfd;border:1px solid #d0d0d0;border-radius:3px"></div><div class="t" style="left:1009.3px;top:480.2px;width:60.7px;text-align:center;font-size:9.3px;color:#1a1a1a">取消</div>
<div class="a" style="left:1079.3px;top:476.6px;width:60.7px;height:15.0px;background:#fdfdfd;border:1px solid #d0d0d0;border-radius:3px"></div><div class="t" style="left:1079.3px;top:480.2px;width:60.7px;text-align:center;font-size:9.3px;color:#1a1a1a">帮助</div>
<!-- COMMAND AREA -->
<div class="a" style="left:0;top:562px;width:1200px;height:1.5px;background:#d8d8d8"></div>
<div class="a" style="left:0;top:563.5px;width:1200px;height:55px;background:#303030"></div>
<svg class="a" style="left:0;top:563px" width="20" height="40">
 <path d="M5 5.3 H16.7 M5 7.3 H16.7" stroke="#9a9a9a" stroke-width="0.9"/>
 <path d="M6 12.5 L15 21.5 M15 12.5 L6 21.5" stroke="#bdbdbd" stroke-width="1.1"/>
 <path d="M7 35 L13.5 28.5 C14.5 27.5 16 29 15 30 L8.5 36.5 Z" stroke="#bdbdbd" stroke-width="1" fill="none"/>
 <path d="M12 36.5 H15.5" stroke="#999" stroke-width="0.8"/>
</svg>
<div class="a" style="left:20px;top:567px;width:1167px;height:48.5px;background:#464646;border:1px solid #b8b8b8;border-bottom:none;border-right:none"></div>
<div class="a" style="left:21px;top:600px;width:1166px;height:1px;background:#5c5c5c"></div>
<div class="a" style="left:21px;top:601px;width:1104px;height:14px;background:#434343"></div>
<div class="a" style="left:20px;top:615px;width:1105px;height:1.5px;background:#e0e0e0"></div>
<div class="a" style="left:1187px;top:567px;width:13px;height:33.5px;background:#f0f0f0"></div>
<div class="a" style="left:1125px;top:600.5px;width:62px;height:15.5px;background:#f0f0f0"></div>
<div class="a" style="left:1138px;top:606.5px;width:13.5px;height:3.5px;background:#7a7a7a"></div>
<div class="a" style="left:1187px;top:600.5px;width:13px;height:15.5px;background:#3c3c3c"></div>
<div class="t" style="left:23px;top:573.5px;font-family:'Liberation Mono',monospace;font-size:9.8px;letter-spacing:-0.3px;color:#dedede"><span style="font-size:10.4px;letter-spacing:0.76px">命令</span>:_+CONSTRAINTSETTINGS</div>
<div class="t" style="left:23px;top:587.5px;font-family:'Liberation Mono',monospace;font-size:9.8px;letter-spacing:-0.3px;color:#dedede"><span style="font-size:10.4px;letter-spacing:0.76px">选项卡索引</span> &lt;0&gt;:0</div>
<div class="t" style="left:23px;top:602.5px;font-family:'Liberation Mono',monospace;font-size:9.8px;letter-spacing:-0.3px;color:#dedede"><span style="font-size:10.4px;letter-spacing:0.76px">命令</span>:</div>
<!-- STATUS BAR -->
<div class="a" style="left:0;top:616.5px;width:1200px;height:2px;background:#2a2a2a"></div>
<div class="a" style="left:0;top:618.5px;width:1200px;height:19.5px;background:#383838"></div>
<div class="a" style="left:0;top:618.5px;width:577px;height:19px;background:#3c3c3c"></div>
<div class="a" style="left:577px;top:618.5px;width:1px;height:19px;background:#4a4a4a"></div>
<div class="a" style="left:30px;top:619px;width:32.5px;height:15px;background:#2d2d2d"></div>
<svg class="a" style="left:0;top:618px" width="170" height="20">
 <path d="M6.7 5.5 H20 M6.7 9.5 H20 M6.7 13.5 H20" stroke="#eee" stroke-width="1.4"/>
 <path d="M98.5 6 V14 M135.8 6 V14" stroke="#777" stroke-width="0.8"/>
 <path d="M145.8 9.7 H156.7 M151.2 4 V15" stroke="#e6e6e6" stroke-width="1.3"/>
</svg>
<div class="t" style="left:37.5px;top:623px;font-size:9.5px;color:#f0f0f0">模型</div>
<div class="t" style="left:70px;top:623px;font-size:9.5px;color:#e0e0e0">布局1</div>
<div class="t" style="left:106.7px;top:623px;font-size:9.5px;color:#e0e0e0">布局2</div>
<div class="t" style="left:589.3px;top:623.5px;font-size:9px;color:#c8c8c8">3922.4591, 2627.0404, 0.0000</div>
<div class="a" style="left:737px;top:620px;width:32.5px;height:16px;background:#2b2b2b"></div>
<div class="a" style="left:802px;top:620px;width:32.5px;height:16px;background:#2b2b2b"></div>
<div class="a" style="left:852px;top:620px;width:30.5px;height:16px;background:#2b2b2b"></div>
<div class="a" style="left:948.8px;top:620px;width:16px;height:16px;background:#2b2b2b"></div>
<svg class="a" style="left:0;top:618px" width="1200" height="20" viewBox="0 618 1200 20">
 <g stroke="#e0e0e0" stroke-width="1" fill="none">
  <!-- grid -->
  <path d="M724 624.5 H734 M724 628 H734 M724 631.5 H734 M726.5 622 V634 M730 622 V634"/>
  <path d="M739.5 624.5 H750 M739.5 628 H750 M739.5 631.5 H750 M742 622 V634 M745.5 622 V634 M749 622 V634"/>
  <!-- snap -->
  <path d="M755 624.5 H761 M758 621.5 V627.5"/><rect x="761.5" y="628.5" width="6.5" height="6"/><path d="M761.5 631.5 H768"/>
  <!-- ortho -->
  <path d="M772 622 V633.5 H782 M775 628.5 V633.5 M772 628.5 H775"/>
  <!-- polar -->
  <path d="M800.5 626 A5 5 0 1 1 797.5 623.5"/><path d="M795 628 L800.5 623"/>
  <!-- osnap box -->
  <rect x="805.5" y="623" width="11" height="11"/>
  <!-- otrack angle -->
  <path d="M821 633.5 H832 M821 633.5 L830 624.5 M824 629.5 L827 632"/>
  <!-- dyn -->
  <path d="M842 630 V636 M838 633 H846"/>
  <!-- transparency -->
  <path d="M870.5 628 A5.5 5.5 0 1 1 876 633.5"/><path d="M873 628 H879 M876 625 V631"/>
  <!-- lineweight -->
  <path d="M885.3 623.5 H898.7 M885.3 631.5 H898.7"/>
  <!-- select -->
  <path d="M906 624 L911.5 629 L909 629.5 L910.5 633 L909 633.5 L907.5 630 L906 632 Z" fill="#e0e0e0"/>
  <!-- magnifier -->
  <circle cx="939" cy="627.5" r="4"/><path d="M942 630.5 L945.3 634"/>
  <!-- table -->
  <rect x="1034.7" y="622" width="11.2" height="12"/><path d="M1034.7 625 H1045.9 M1034.7 628 H1045.9 M1034.7 631 H1045.9 M1038.5 622 V634"/>
  <!-- gauge -->
  <path d="M1130 632 A5.8 5.8 0 1 1 1141 632"/><path d="M1133.5 627 L1136 629.5"/>
  <!-- fullscreen -->
  <rect x="1147" y="622.5" width="10" height="10"/><path d="M1148 631.5 L1156 623.5"/>
 </g>
 <g fill="#e0e0e0">
  <rect x="838" y="622" width="4.5" height="3"/><rect x="838" y="625" width="4" height="4"/><rect x="834" y="626" width="8" height="3"/>
  <rect x="856" y="623" width="9" height="9" fill="url(#chk)"/>
 </g>
 <defs><pattern id="chk" patternUnits="userSpaceOnUse" width="2" height="2"><rect width="1" height="1" fill="#e0e0e0"/><rect x="1" y="1" width="1" height="1" fill="#e0e0e0"/></pattern></defs>
 <circle cx="734" cy="634" r="1.2" fill="#3d8ae6"/>
 <circle cx="816.5" cy="623" r="1.2" fill="#3d8ae6"/>
 <path d="M886 627.5 H898.7" stroke="#3d8ae6" stroke-width="1.3"/>
 <path d="M912 623 H906 L906 624" stroke="#3d8ae6" stroke-width="0.8" stroke-dasharray="1 1"/>
 <!-- layers -->
 <path d="M917.5 624.5 L924 621.5 L930.5 624.5 L924 627.5 Z" fill="#dcdcdc"/>
 <path d="M917.5 627 L924 630 L930.5 627 M917.5 629.5 L924 632.5 L930.5 629.5" stroke="#dcdcdc" stroke-width="1.2" fill="none"/>
 <circle cx="930" cy="633" r="1" fill="#3d8ae6"/>
 <rect x="937" y="626" width="4" height="3" fill="#3d8ae6"/>
 <!-- monitor -->
 <rect x="952" y="622.5" width="11" height="7" fill="#3d8ae6"/>
 <path d="M950 625 V632.5 H959" stroke="#3d8ae6" stroke-width="1.3" fill="none"/>
 <!-- annotation -->
 <path d="M973 622 L973 628 L968.5 632 M973 628 L977.3 632" stroke="#e0e0e0" stroke-width="1.6" fill="none"/>
 <path d="M1007 623 L1007 628 L1003 632 M1007 628 L1011.5 632" stroke="#e0e0e0" stroke-width="1.6" fill="none"/>
 <path d="M1010.5 621.5 L1013 621.5 L1011.8 625.5 Z" fill="#f5b82e"/>
 <path d="M1024 623 L1024 628 L1020 632 M1024 628 L1028.5 632" stroke="#8a8a8a" stroke-width="1.6" fill="none"/>
 <path d="M1027 621.5 V625 M1025.3 623.2 H1028.7" stroke="#8a8a8a" stroke-width="0.9"/>
 <path d="M994 627 L996 629 L998 627" stroke="#bbb" stroke-width="0.9" fill="none"/>
 <!-- gear -->
 <circle cx="1086.5" cy="628" r="3.8" fill="none" stroke="#e8e8e8" stroke-width="2.6" stroke-dasharray="1.6 0.9"/>
 <circle cx="1086.5" cy="628" r="3" fill="none" stroke="#e8e8e8" stroke-width="1.8"/>
 <!-- lock -->
 <rect x="1097.5" y="627" width="7.5" height="6" fill="#2f7fe8"/>
 <path d="M1103.5 627 V624.5 C1103.5 621.5 1108.5 621.5 1108.5 624.5 V625.5" stroke="#2f7fe8" stroke-width="1.3" fill="none"/>
 <!-- bulb -->
 <circle cx="1119" cy="626.5" r="4.2" fill="#f5b82e"/>
 <rect x="1117.3" y="630" width="3.4" height="4" fill="#d9a030"/>
</svg>
<div class="t" style="left:980.8px;top:623.5px;font-size:9.5px;color:#e0e0e0">1:1</div>
<div class="t" style="left:1161.3px;top:623px;font-size:9.5px;color:#e0e0e0">GstarCAD</div>
<div class="a" style="left:0;top:637px;width:1200px;height:1px;background:#6a6a6a"></div>
</body></html>
